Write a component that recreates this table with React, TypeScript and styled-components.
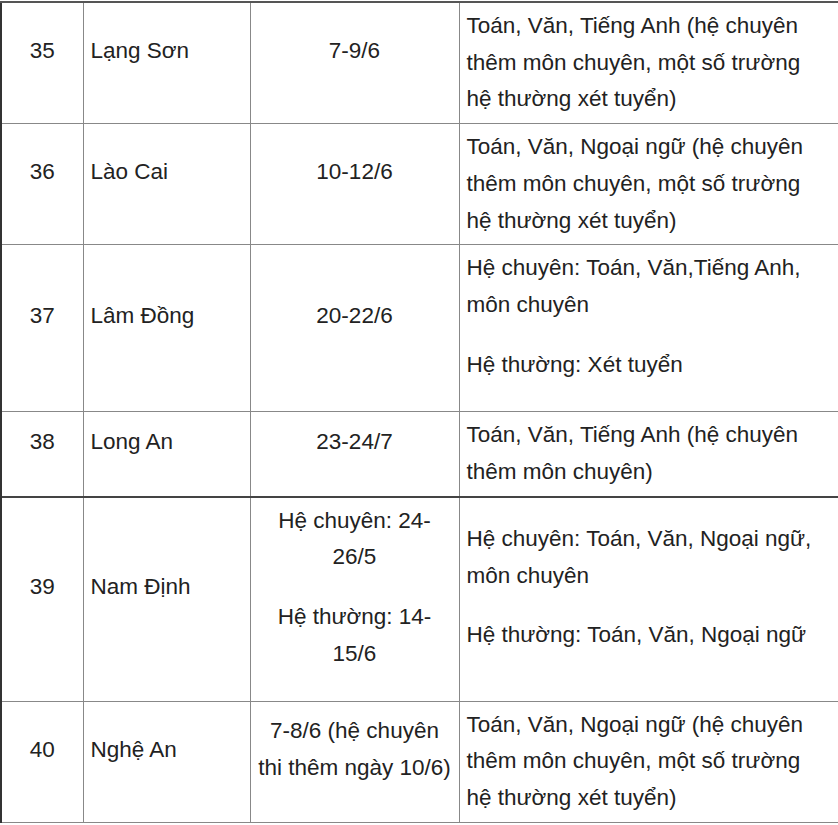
import styled, { createGlobalStyle } from "styled-components";

const GlobalStyle = createGlobalStyle`
  html, body {
    margin: 0;
    padding: 0;
    background: #fff;
  }
  body {
    font-family: "Liberation Sans", Arial, sans-serif;
    color: #222;
  }
`;

const Wrapper = styled.div`
  padding-top: 1px;
  width: 838px;
`;

const Table = styled.table`
  width: 837px;
  border-collapse: collapse;
  table-layout: fixed;
  font-size: 22.5px;
  line-height: 36.7px;
`;

const Row = styled.tr<{ $strong?: boolean }>`
  td {
    border-top: ${(p) => (p.$strong ? "2px solid #444" : "1px solid #888")};
  }
  &:first-child td {
    border-top: 2px solid #555;
  }
`;

const Cell = styled.td<{ $align?: "left" | "center" }>`
  border: 1px solid #888;
  padding: 5px 7px;
  vertical-align: middle;
  text-align: ${(p) => p.$align || "left"};
  white-space: nowrap;
  &:first-child {
    border-left: 2px solid #333;
  }
`;

const Para = styled.p`
  margin: 0 0 23px;
`;

type Block = string[][];

interface Entry {
  no: string;
  name: string;
  date: Block;
  subjects: Block;
  strong?: boolean;
}

const ngoaiNgu = [
  ["Toán, Văn, Ngoại ngữ (hệ chuyên", "thêm môn chuyên, một số trường", "hệ thường xét tuyển)"],
];

const rows: Entry[] = [
  {
    no: "35",
    name: "Lạng Sơn",
    date: [["7-9/6"]],
    subjects: [["Toán, Văn, Tiếng Anh (hệ chuyên", "thêm môn chuyên, một số trường", "hệ thường xét tuyển)"]],
  },
  { no: "36", name: "Lào Cai", date: [["10-12/6"]], subjects: ngoaiNgu },
  {
    no: "37",
    name: "Lâm Đồng",
    date: [["20-22/6"]],
    subjects: [["Hệ chuyên: Toán, Văn,Tiếng Anh,", "môn chuyên"], ["Hệ thường: Xét tuyển"]],
  },
  {
    no: "38",
    name: "Long An",
    date: [["23-24/7"]],
    subjects: [["Toán, Văn, Tiếng Anh (hệ chuyên", "thêm môn chuyên)"]],
  },
  {
    no: "39",
    name: "Nam Định",
    date: [["Hệ chuyên: 24-", "26/5"], ["Hệ thường: 14-", "15/6"]],
    subjects: [["Hệ chuyên: Toán, Văn, Ngoại ngữ,", "môn chuyên"], ["Hệ thường: Toán, Văn, Ngoại ngữ"]],
    strong: true,
  },
  {
    no: "40",
    name: "Nghệ An",
    date: [["7-8/6 (hệ chuyên", "thi thêm ngày 10/6)"]],
    subjects: ngoaiNgu,
  },
];

function Lines({ lines }: { lines: string[] }) {
  return (
    <>
      {lines.map((l, i) => (
        <span key={i}>
          {i > 0 && <br />}
          {l}
        </span>
      ))}
    </>
  );
}

// paragraphs keep their bottom margin; a lone block in the last column is bare text
function Content({ block, bare }: { block: Block; bare?: boolean }) {
  if (bare && block.length === 1) return <Lines lines={block[0]} />;
  return (
    <>
      {block.map((lines, i) => (
        <Para key={i}>
          <Lines lines={lines} />
        </Para>
      ))}
    </>
  );
}

function App() {
  return (
    <Wrapper>
      <GlobalStyle />
      <Table>
        <colgroup>
          <col style={{ width: 82 }} />
          <col style={{ width: 167 }} />
          <col style={{ width: 209 }} />
          <col style={{ width: 379 }} />
        </colgroup>
        <tbody>
          {rows.map((r) => (
            <Row key={r.no} $strong={r.strong}>
              <Cell $align="center">
                <Para>{r.no}</Para>
              </Cell>
              <Cell>
                <Para>{r.name}</Para>
              </Cell>
              <Cell $align="center">
                <Content block={r.date} />
              </Cell>
              <Cell>
                <Content block={r.subjects} bare />
              </Cell>
            </Row>
          ))}
        </tbody>
      </Table>
    </Wrapper>
  );
}

export default App;
